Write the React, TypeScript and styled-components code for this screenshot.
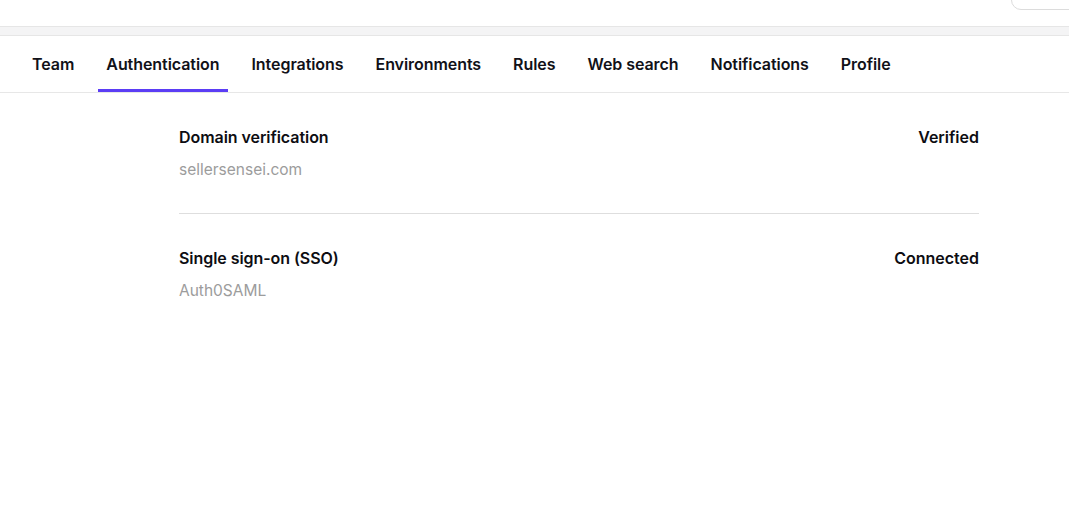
import React from 'react';
import styled, { createGlobalStyle } from 'styled-components';

const GlobalStyle = createGlobalStyle`
    html, body {
        margin: 0;
        padding: 0;
        background: #fff;
        font-family: Inter, "Noto Sans", sans-serif;
        color: #0d0d12;
    }
`;

const Page = styled.div`
    width: 1069px;
    height: 513px;
    overflow: hidden;
    display: flex;
    flex-direction: column;
    background: #fff;
`;

const TopBar = styled.div`
    height: 26px;
    border-bottom: 1px solid #e6e6e6;
    display: flex;
    justify-content: flex-end;
    align-items: flex-start;
    overflow: hidden;
`;

const SearchBox = styled.div`
    width: 70px;
    height: 20px;
    margin-top: -10px;
    margin-right: -12px;
    border: 1px solid #dcdcdc;
    border-radius: 12px;
    box-sizing: border-box;
`;

const Band = styled.div`
    height: 8px;
    background: #f4f4f5;
    border-bottom: 1px solid #e6e6e6;
`;

const Tabs = styled.nav`
    display: flex;
    gap: 16px;
    padding: 0 24px;
    height: 56px;
    border-bottom: 1px solid #e7e7e7;
`;

const Tab = styled.div<{ $active?: boolean }>`
    position: relative;
    display: flex;
    align-items: center;
    padding: 0 8px;
    font-size: 16px;
    font-weight: 600;
    letter-spacing: -0.06px;
    color: #111118;
    &::after {
        content: '';
        position: absolute;
        left: 0;
        right: 0;
        bottom: 0;
        height: 3px;
        background: ${p => (p.$active ? '#5b3df5' : 'transparent')};
    }
`;

const Content = styled.div`
    width: 800px;
    margin-left: 179px;
`;

const Row = styled.div<{ $last?: boolean }>`
    display: flex;
    justify-content: space-between;
    align-items: flex-start;
    padding: 34px 0 33px;
    border-bottom: ${p => (p.$last ? 'none' : '1px solid #dedede')};
`;

const Info = styled.div`
    display: flex;
    flex-direction: column;
    gap: 13px;
`;

const Title = styled.div`
    font-size: 16px;
    line-height: 20px;
    font-weight: 600;
    letter-spacing: -0.06px;
    color: #0d0d12;
`;

const Sub = styled.div`
    font-size: 15.5px;
    line-height: 20px;
    color: #9c9c9c;
`;

const Status = styled.div`
    font-size: 16px;
    line-height: 20px;
    font-weight: 600;
    color: #0d0d12;
`;

const tabs = ['Team', 'Authentication', 'Integrations', 'Environments', 'Rules', 'Web search', 'Notifications', 'Profile'];

const rows = [
    { title: 'Domain verification', sub: 'sellersensei.com', status: 'Verified' },
    { title: 'Single sign-on (SSO)', sub: 'Auth0SAML', status: 'Connected' },
];

export default function App() {
    return (
        <Page>
            <GlobalStyle />
            <TopBar>
                <SearchBox />
            </TopBar>
            <Band />
            <Tabs>
                {tabs.map(t => (
                    <Tab key={t} $active={t === 'Authentication'}>{t}</Tab>
                ))}
            </Tabs>
            <Content>
                {rows.map((r, i) => (
                    <Row key={r.title} $last={i === rows.length - 1}>
                        <Info>
                            <Title>{r.title}</Title>
                            <Sub>{r.sub}</Sub>
                        </Info>
                        <Status>{r.status}</Status>
                    </Row>
                ))}
            </Content>
        </Page>
    );
}
